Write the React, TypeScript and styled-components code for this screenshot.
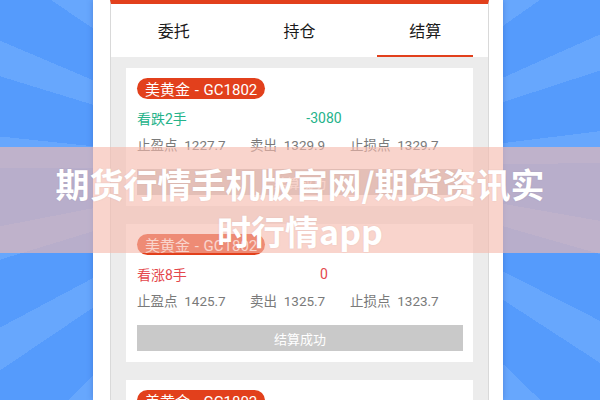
import styled, { createGlobalStyle } from 'styled-components';

const GlobalStyle = createGlobalStyle`
  html, body {
    margin: 0;
    padding: 0;
  }
  body {
    font-family: Roboto, "Noto Sans CJK SC", sans-serif;
  }
`;

const Page = styled.main`
  position: relative;
  width: 600px;
  height: 400px;
  overflow: hidden;
  background-color: #559bfc;
  background-image: repeating-conic-gradient(
    from 4deg at 50% 42%,
    #559bfc 0deg 11deg,
    #67a7fd 11deg 17deg
  );
`;

const Phone = styled.div`
  width: 410px;
  height: 400px;
  margin-left: 93px;
  padding-left: 17px;
  box-sizing: border-box;
  background: #fff;
  box-shadow: 0 0 6px rgba(30, 70, 160, 0.35);
`;

const Screen = styled.div`
  width: 379px;
  height: 400px;
  box-sizing: border-box;
  border-left: 1px solid #d9d9d9;
  border-right: 1px solid #d9d9d9;
  border-top: 4px solid #e2401c;
  background: #ececec;
  overflow: hidden;
`;

const Tabs = styled.nav`
  display: grid;
  grid-template-columns: repeat(3, 1fr);
  height: 53px;
  background: #fff;
`;

const Tab = styled.div<{ $active?: boolean }>`
  position: relative;
  display: flex;
  align-items: center;
  justify-content: center;
  padding-bottom: 1px;
  font-size: 16px;
  color: #1a1a1a;

  &::after {
    content: '';
    display: ${(p) => (p.$active ? 'block' : 'none')};
    position: absolute;
    left: 15px;
    right: 15px;
    bottom: 0;
    height: 2px;
    background: #e2401c;
  }
`;

const List = styled.section`
  display: flex;
  flex-direction: column;
  gap: 18px;
  padding: 11px 15px 0;
`;

const Card = styled.article`
  background: #fff;
  padding: 10px 10px 11px 11px;
  flex-shrink: 0;
`;

const Badge = styled.span`
  display: inline-flex;
  align-items: center;
  height: 21px;
  padding: 0 8px;
  border-radius: 11px;
  background: #e2401c;
  color: #fff;
  font-size: 15px;
  word-spacing: 1px;
`;

const ResultRow = styled.div<{ $color: string }>`
  display: grid;
  grid-template-columns: 150px 74px;
  margin-top: 8px;
  height: 22px;
  align-items: center;
  font-size: 14px;
  color: ${(p) => p.$color};

  span:last-child {
    text-align: center;
  }
`;

const Stats = styled.div`
  display: grid;
  grid-template-columns: 113px 100px 1fr;
  margin-top: 4px;
  height: 22px;
  align-items: center;
  font-size: 13.5px;
  color: #7a7a7a;
  white-space: nowrap;
`;

const DoneButton = styled.div`
  margin-top: 14px;
  height: 26px;
  display: flex;
  align-items: center;
  justify-content: center;
  background: #c9c9c9;
  color: #fff;
  font-size: 13px;
`;

const Banner = styled.div`
  position: absolute;
  left: 0;
  right: 0;
  top: 147px;
  height: 106px;
  box-sizing: border-box;
  padding-top: 13px;
  background: rgba(246, 186, 172, 0.62);
  color: #fff;
  font-family: "Noto Sans CJK SC", sans-serif;
  font-weight: 700;
  font-size: 34px;
  line-height: 47px;
  text-align: center;
  text-shadow: 0 0 2px rgba(0, 0, 0, 0.08);
`;

type Order = {
  label: string;
  value: string;
  up: boolean;
  tp: string;
  sell: string;
  sl: string;
};

const orders: Order[] = [
  { label: '看跌2手', value: '-3080', up: false, tp: '1227.7', sell: '1329.9', sl: '1329.7' },
  { label: '看涨8手', value: '0', up: true, tp: '1425.7', sell: '1325.7', sl: '1323.7' },
  { label: '看涨8手', value: '0', up: true, tp: '1425.7', sell: '1325.7', sl: '1323.7' },
];

function App() {
  return (
    <Page>
      <GlobalStyle />
      <Phone>
        <Screen>
          <Tabs>
            <Tab>委托</Tab>
            <Tab>持仓</Tab>
            <Tab $active>结算</Tab>
          </Tabs>
          <List>
            {orders.map((o, i) => (
              <Card key={i}>
                <Badge>美黄金 - GC1802</Badge>
                <ResultRow $color={o.up ? '#e4474c' : '#25b38a'}>
                  <span>{o.label}</span>
                  <span>{o.value}</span>
                </ResultRow>
                <Stats>
                  <span>止盈点&nbsp; {o.tp}</span>
                  <span>卖出&nbsp; {o.sell}</span>
                  <span>止损点&nbsp; {o.sl}</span>
                </Stats>
                <DoneButton>结算成功</DoneButton>
              </Card>
            ))}
          </List>
        </Screen>
      </Phone>
      <Banner>
        期货行情手机版官网/期货资讯实
        <br />
        时行情app
      </Banner>
    </Page>
  );
}

export default App;
